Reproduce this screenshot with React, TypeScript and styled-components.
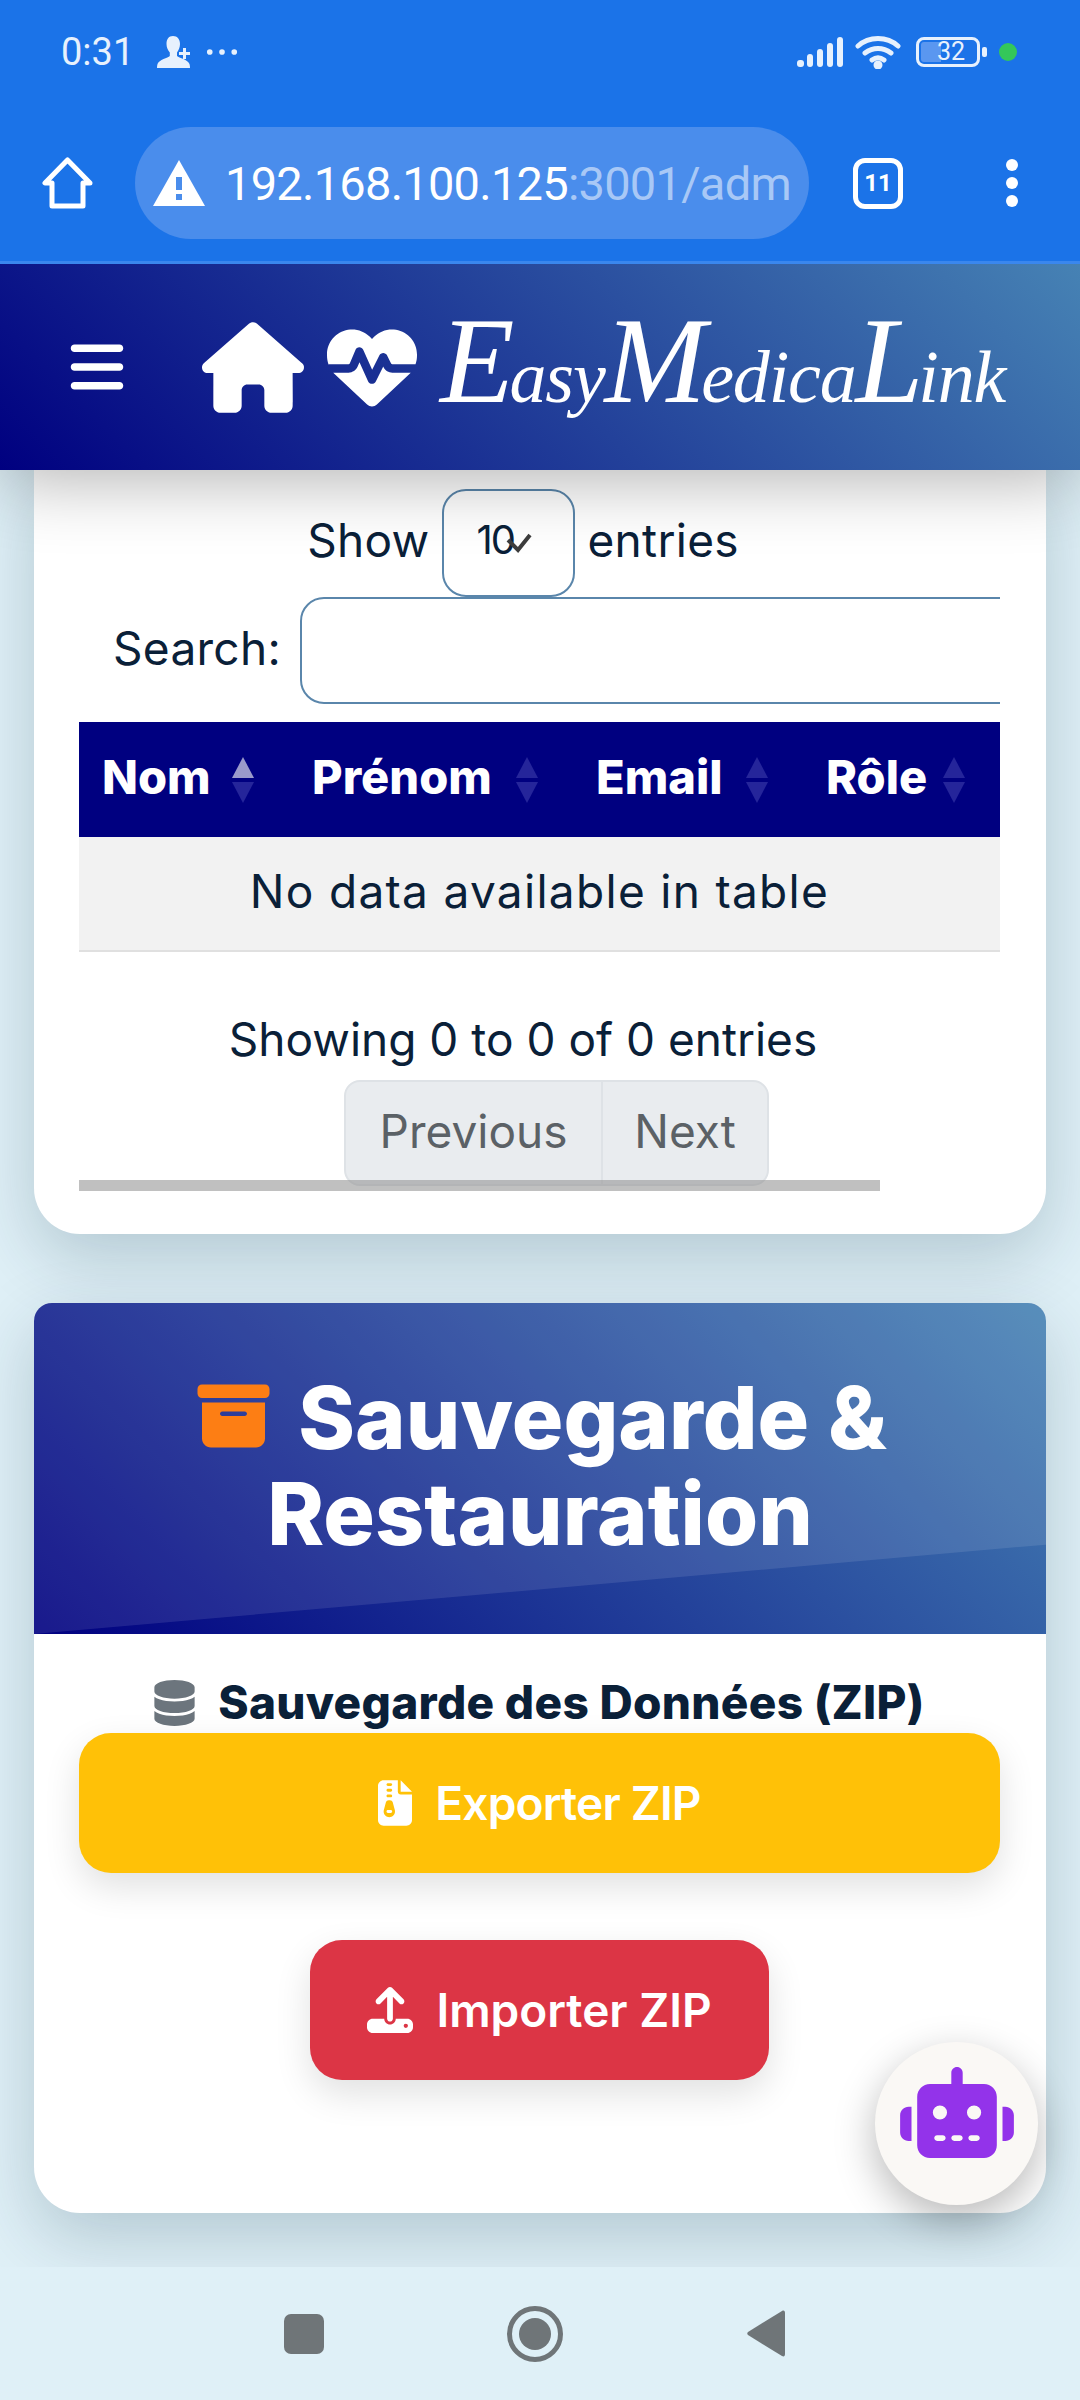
import React, {FC} from 'react';
import styled, {createGlobalStyle} from 'styled-components';
import {FaBars, FaBoxArchive, FaDatabase, FaFileZipper, FaHeartPulse, FaHouse, FaRobot, FaUpload} from 'react-icons/fa6';

const GlobalStyle = createGlobalStyle`
  html, body {
    margin: 0;
    padding: 0;
    width: 1080px;
    height: 2400px;
    overflow: hidden;
    background: #dff0f7;
  }
  * { box-sizing: border-box; }
`;

const Screen = styled.div`
  position: relative;
  width: 1080px;
  height: 2400px;
  display: flex;
  flex-direction: column;
  overflow: hidden;
  background: #dff0f7;
  font-family: Inter, "Open Sans", sans-serif;
  color: #0a2038;
`;

/* browser chrome */
const Chrome = styled.div`
  height: 264px;
  flex: none;
  background: #1b73e8;
  border-bottom: 3px solid #3a87ee;
  position: relative;
  z-index: 3;
`;

const StatusBar = styled.div`
  height: 104px;
  padding: 0 63px 0 61px;
  display: flex;
  align-items: center;
  justify-content: space-between;
  color: #e7f1fd;
  font-family: Roboto, sans-serif;
`;

const StatusGroup = styled.div`
  display: flex;
  align-items: center;
`;

const Clock = styled.span`
  font-size: 38px;
  line-height: 40px;
  width: 96px;
`;

const BatteryBox = styled.div`
  position: relative;
  width: 64px;
  height: 30px;
  margin-left: 15px;
  border: 3px solid #e7f1fd;
  border-radius: 8px;
  font-size: 25px;
  line-height: 24px;
  text-align: center;
  background: linear-gradient(90deg, #5a97f0 0 38%, transparent 38%);
  background-clip: content-box;
  padding: 2px;
  & span {
    position: relative;
    top: -2px;
    left: 3px;
    display: block;
  }
`;

const BatteryNib = styled.div`
  width: 5px;
  height: 10px;
  margin-left: 2px;
  border-radius: 2px;
  background: #e7f1fd;
`;

const GreenDot = styled.div`
  width: 18px;
  height: 18px;
  margin-left: 12px;
  border-radius: 50%;
  background: #34c759;
`;

const Toolbar = styled.div`
  height: 112px;
  margin-top: 23px;
  padding-left: 42px;
  display: flex;
  align-items: center;
`;

const UrlBar = styled.div`
  width: 674px;
  height: 112px;
  margin-left: 42px;
  padding-left: 18px;
  border-radius: 56px;
  background: #4a8dec;
  display: flex;
  align-items: center;
  font-family: Roboto, sans-serif;
  font-size: 47px;
  letter-spacing: -0.75px;
  color: #ffffff;
  white-space: nowrap;
  overflow: hidden;
`;

const UrlText = styled.span`
  margin-left: 20px;
  & em {
    font-style: normal;
    color: #a8c8f6;
  }
`;

const TabCount = styled.div`
  width: 50px;
  height: 51px;
  margin-left: 44px;
  border: 5px solid #ffffff;
  border-radius: 12px;
  display: flex;
  align-items: center;
  justify-content: center;
  color: #ffffff;
  font-family: Roboto, sans-serif;
  font-weight: 700;
  font-size: 24px;
`;

const MenuDots = styled.div`
  margin-left: 103px;
  display: flex;
  flex-direction: column;
  gap: 6px;
  & i {
    width: 12px;
    height: 12px;
    border-radius: 50%;
    background: #ffffff;
  }
`;

/* app header */
const AppHeader = styled.header`
  height: 206px;
  flex: none;
  position: relative;
  z-index: 2;
  padding-left: 67px;
  display: flex;
  align-items: center;
  color: #ffffff;
  background: linear-gradient(45deg, #000080 0%, #4682b4 100%);
  box-shadow: 0 10px 70px rgba(0, 0, 0, 0.3);
`;

const LogoIcons = styled.div`
  margin-left: 75px;
  display: flex;
  align-items: center;
  gap: 23px;
`;

const Logo = styled.div`
  margin: 0 0 12px 23px;
  font-family: "Liberation Serif", serif;
  font-style: italic;
  font-size: 74px;
  letter-spacing: -1.2px;
  white-space: nowrap;
  line-height: 1;
  & b {
    font-weight: 400;
    font-size: 122px;
    letter-spacing: -5px;
  }
`;

/* page */
const Main = styled.main`
  flex: 1;
  min-height: 0;
  padding: 0 34px;
  overflow: hidden;
`;

const TableCard = styled.section`
  height: 764px;
  padding: 19px 46px 0 45px;
  background: #ffffff;
  border-radius: 0 0 46px 46px;
  box-shadow: 0 24px 70px rgba(0, 40, 60, 0.2);
`;

const ScrollArea = styled.div`
  position: relative;
  width: 921px;
`;

const Clip = styled.div`
  overflow: hidden;
`;

const LengthRow = styled.div`
  width: 888px;
  height: 108px;
  display: flex;
  justify-content: center;
  font-size: 46px;
  letter-spacing: 0.3px;
  line-height: 102px;
`;

const Select = styled.div`
  width: 133px;
  height: 108px;
  margin: 0 12px 0 13px;
  padding-left: 32px;
  border: 2px solid #5a86ab;
  border-radius: 24px;
  position: relative;
  font-size: 40px;
  line-height: 98px;
  letter-spacing: -2px;
  & svg {
    position: absolute;
    left: 62px;
    top: 42px;
  }
`;

const SearchRow = styled.div`
  height: 107px;
  padding-left: 34px;
  display: flex;
  font-size: 46px;
  letter-spacing: 0.3px;
  line-height: 102px;
  white-space: nowrap;
`;

const SearchInput = styled.div`
  width: 900px;
  height: 107px;
  flex: none;
  margin-left: 19px;
  border: 2px solid #5a86ab;
  border-radius: 24px;
  background: #ffffff;
`;

const DataTable = styled.table`
  width: 921px;
  margin-top: 18px;
  border-collapse: collapse;
  table-layout: fixed;
`;

const Th = styled.th<{$w: number}>`
  width: ${(p) => p.$w}px;
  height: 115px;
  padding: 0;
  background: #000080;
  color: #ffffff;
`;

const ThInner = styled.div`
  padding: 0 35px 0 23px;
  display: flex;
  align-items: center;
  justify-content: space-between;
  font-size: 47px;
  font-weight: 800;
  white-space: nowrap;
`;

const ThLabel = styled.span`
  position: relative;
  top: -3px;
`;

const SortMark = styled.span<{$active?: boolean}>`
  display: flex;
  flex-direction: column;
  gap: 4px;
  & i {
    display: block;
    width: 0;
    height: 0;
    border-left: 11px solid transparent;
    border-right: 11px solid transparent;
  }
  & i:first-child {
    border-bottom: 21px solid ${(p) => (p.$active ? '#9a9acb' : '#25259a')};
  }
  & i:last-child {
    border-top: 21px solid #25259a;
  }
`;

const EmptyCell = styled.td`
  height: 114px;
  padding: 0 0 6px;
  background: #f2f2f2;
  border-bottom: 2px solid #e0e0e0;
  text-align: center;
  font-size: 46px;
  letter-spacing: 1.3px;
`;

const Info = styled.div`
  width: 888px;
  height: 60px;
  margin-top: 59px;
  text-align: center;
  font-size: 46px;
  line-height: 56px;
  white-space: nowrap;
`;

const Pagination = styled.div`
  width: 425px;
  height: 106px;
  margin: 9px 0 0 265px;
  display: flex;
  background: #e9ecef;
  border: 2px solid #dee2e6;
  border-radius: 16px;
  color: #5b6166;
  font-size: 46px;
  line-height: 98px;
`;

const PageButton = styled.div<{$w: number}>`
  width: ${(p) => p.$w}px;
  text-align: center;
  & + & {
    border-left: 2px solid #dee2e6;
  }
`;

const ScrollThumb = styled.div`
  position: absolute;
  left: 0;
  bottom: -5px;
  width: 801px;
  height: 11px;
  background: rgba(150, 150, 150, 0.6);
`;

const BackupCard = styled.section`
  height: 910px;
  margin-top: 69px;
  background: #ffffff;
  border-radius: 18px 18px 46px 46px;
  box-shadow: 0 24px 70px rgba(0, 40, 60, 0.2);
`;

const BackupHeader = styled.div`
  position: relative;
  height: 331px;
  padding: 67px 40px 0;
  border-radius: 18px 18px 0 0;
  background: linear-gradient(45deg, #000080 0%, #4682b4 100%);
  overflow: hidden;
  &::before {
    content: "";
    position: absolute;
    inset: 0;
    background: rgba(255, 255, 255, 0.1);
    clip-path: polygon(0 0, 100% 0, 100% 73%, 0 100%);
  }
`;

const BackupTitle = styled.h2`
  position: relative;
  margin: 0;
  text-align: center;
  color: #ffffff;
  font-size: 86px;
  font-weight: 800;
  line-height: 96px;
  & svg {
    color: #fd7e14;
    width: 81px;
    height: 72px;
    margin-right: 24px;
    vertical-align: -3px;
  }
`;

const BackupBody = styled.div`
  padding: 38px 46px 0 45px;
`;

const SubHeading = styled.h3`
  height: 61px;
  margin: 0;
  display: flex;
  align-items: center;
  justify-content: center;
  gap: 23px;
  font-size: 46px;
  font-weight: 800;
  letter-spacing: 0.3px;
  line-height: 61px;
  white-space: nowrap;
  & svg {
    color: #6c757d;
    width: 41px;
    height: 46px;
  }
`;

const ActionButton = styled.div<{$bg: string; $wide?: boolean}>`
  position: relative;
  width: ${(p) => (p.$wide ? '921px' : '459px')};
  height: 140px;
  margin: ${(p) => (p.$wide ? '0' : '67px auto 0')};
  display: flex;
  align-items: center;
  justify-content: center;
  gap: 23px;
  border-radius: 32px;
  background: ${(p) => p.$bg};
  color: #ffffff;
  font-size: 46px;
  font-weight: 600;
  letter-spacing: ${(p) => (p.$wide ? '-0.8px' : '0')};
  box-shadow: 0 14px 36px rgba(0, 0, 0, 0.12);
`;

const ChatFab = styled.div`
  position: absolute;
  left: 875px;
  top: 2042px;
  width: 163px;
  height: 163px;
  padding-bottom: 22px;
  display: flex;
  align-items: center;
  justify-content: center;
  border-radius: 50%;
  background: #faf8f5;
  color: #9333ea;
  box-shadow: 0 14px 40px rgba(0, 0, 0, 0.28);
  z-index: 2;
`;

const NavBar = styled.nav`
  height: 133px;
  flex: none;
  position: relative;
  z-index: 2;
  background: #dff0f7;
  padding-left: 284px;
  display: flex;
  align-items: center;
`;

const NavSquare = styled.div`
  width: 40px;
  height: 40px;
  border-radius: 7px;
  background: #6f7578;
`;

const NavCircle = styled.div`
  width: 56px;
  height: 56px;
  margin-left: 183px;
  border: 5px solid #6f7578;
  border-radius: 50%;
  display: flex;
  align-items: center;
  justify-content: center;
  &::after {
    content: "";
    width: 32px;
    height: 32px;
    border-radius: 50%;
    background: #6f7578;
  }
`;

const NavBack = styled.svg`
  margin-left: 184px;
`;

const columns = [
  {label: 'Nom', width: 210, active: true},
  {label: 'Prénom', width: 284},
  {label: 'Email', width: 230},
  {label: 'Rôle', width: 197},
];

const App: FC = () => {
  return (
    <Screen>
      <GlobalStyle />
      <Chrome>
        <StatusBar>
          <StatusGroup>
            <Clock>0:31</Clock>
            <svg width="36" height="32" viewBox="0 0 36 32" fill="#e7f1fd">
              <path d="M16 0c4.500 0 7 3.500 7 8 0 3.500-1.500 6.500-3 8.500v3.500c2 2 11 3.500 12.500 8 .4 1.500.5 2.800.5 4H0c0-1.200.1-2.500.5-4C2 23.500 11 22 12.800 20v-3.500C11 14.500 9.500 11.500 9.500 8 9.500 3.500 11.500 0 16 0z" />
              <path d="M26 12h3v4h4v3h-4v4h-3v-4h-4v-3h4z" />
            </svg>
            <svg width="32" height="8" viewBox="0 0 34 8" fill="#e7f1fd" style={{marginLeft: 13}}>
              <circle cx="4" cy="4" r="3" />
              <circle cx="17" cy="4" r="3" />
              <circle cx="30" cy="4" r="3" />
            </svg>
          </StatusGroup>
          <StatusGroup>
            <svg width="46" height="30" viewBox="0 0 46 30" fill="#e7f1fd">
              <rect x="0" y="23" width="7" height="7" rx="3" />
              <rect x="10" y="17" width="6" height="13" rx="3" />
              <rect x="20" y="12" width="6" height="18" rx="3" />
              <rect x="30" y="6" width="6" height="24" rx="3" />
              <rect x="40" y="0" width="6" height="30" rx="3" />
            </svg>
            <svg width="46" height="34" viewBox="0 0 46 34" fill="none" stroke="#e7f1fd" strokeWidth="5" strokeLinecap="round" style={{marginLeft: 12}}>
              <path d="M3 11C14 1 32 1 43 11" />
              <path d="M10 18c8-6 18-6 26 0" />
              <path d="M17 25c4-3 8-3 12 0" />
              <circle cx="23" cy="30" r="2" fill="#e7f1fd" />
            </svg>
            <BatteryBox>
              <span>32</span>
            </BatteryBox>
            <BatteryNib />
            <GreenDot />
          </StatusGroup>
        </StatusBar>
        <Toolbar>
          <svg width="51" height="52" viewBox="0 0 51 52" fill="none" stroke="#ffffff" strokeWidth="5" strokeLinejoin="round">
            <path d="M25.500 3 3 26h7v23h31V26h7z" />
          </svg>
          <UrlBar>
            <svg width="52" height="46" viewBox="0 0 52 46">
              <path d="M26 0 52 46H0z" fill="#ffffff" />
              <rect x="23" y="17" width="6" height="13" fill="#4a8dec" />
              <rect x="23" y="34" width="6" height="6" fill="#4a8dec" />
            </svg>
            <UrlText>
              192.168.100.125<em>:3001/adm</em>
            </UrlText>
          </UrlBar>
          <TabCount>11</TabCount>
          <MenuDots>
            <i />
            <i />
            <i />
          </MenuDots>
        </Toolbar>
      </Chrome>

      <AppHeader>
        <FaBars size={60} />
        <LogoIcons>
          <FaHouse size={102} style={{width: 102, height: 91}} />
          <FaHeartPulse size={90} />
        </LogoIcons>
        <Logo>
          <b>E</b>asy<b>M</b>edica<b>L</b>ink
        </Logo>
      </AppHeader>

      <Main>
        <TableCard>
          <ScrollArea>
            <LengthRow>
              Show
              <Select>
                10
                <svg width="26" height="20" viewBox="0 0 26 20" fill="none" stroke="#3d3d3d" strokeWidth="4">
                  <path d="M2 7l10 10L24 2" />
                </svg>
              </Select>
              entries
            </LengthRow>
            <Clip>
              <SearchRow>
                Search:
                <SearchInput />
              </SearchRow>
              <DataTable>
                <thead>
                  <tr>
                    {columns.map((col) => (
                      <Th key={col.label} $w={col.width}>
                        <ThInner>
                          <ThLabel>{col.label}</ThLabel>
                          <SortMark $active={col.active}>
                            <i />
                            <i />
                          </SortMark>
                        </ThInner>
                      </Th>
                    ))}
                  </tr>
                </thead>
                <tbody>
                  <tr>
                    <EmptyCell colSpan={4}>No data available in table</EmptyCell>
                  </tr>
                </tbody>
              </DataTable>
            </Clip>
            <Info>Showing 0 to 0 of 0 entries</Info>
            <Pagination>
              <PageButton $w={255}>Previous</PageButton>
              <PageButton $w={166}>Next</PageButton>
            </Pagination>
            <ScrollThumb />
          </ScrollArea>
        </TableCard>

        <BackupCard>
          <BackupHeader>
            <BackupTitle>
              <FaBoxArchive />
              Sauvegarde &amp; Restauration
            </BackupTitle>
          </BackupHeader>
          <BackupBody>
            <SubHeading>
              <FaDatabase />
              Sauvegarde des Données (ZIP)
            </SubHeading>
            <ActionButton $bg="#ffc107" $wide>
              <FaFileZipper style={{width: 34, height: 46}} />
              Exporter ZIP
            </ActionButton>
            <ActionButton $bg="#dc3545">
              <FaUpload size={46} />
              Importer ZIP
            </ActionButton>
          </BackupBody>
        </BackupCard>
      </Main>

      <ChatFab>
        <FaRobot style={{width: 114, height: 91}} />
      </ChatFab>

      <NavBar>
        <NavSquare />
        <NavCircle />
        <NavBack width="38" height="47" viewBox="0 0 38 47">
          <path d="M35 1c2-1 3 0 3 2v41c0 2-1 3-3 2L1 25c-1-1-1-2 0-3z" fill="#6f7578" />
        </NavBack>
      </NavBar>
    </Screen>
  );
};

export default App;
